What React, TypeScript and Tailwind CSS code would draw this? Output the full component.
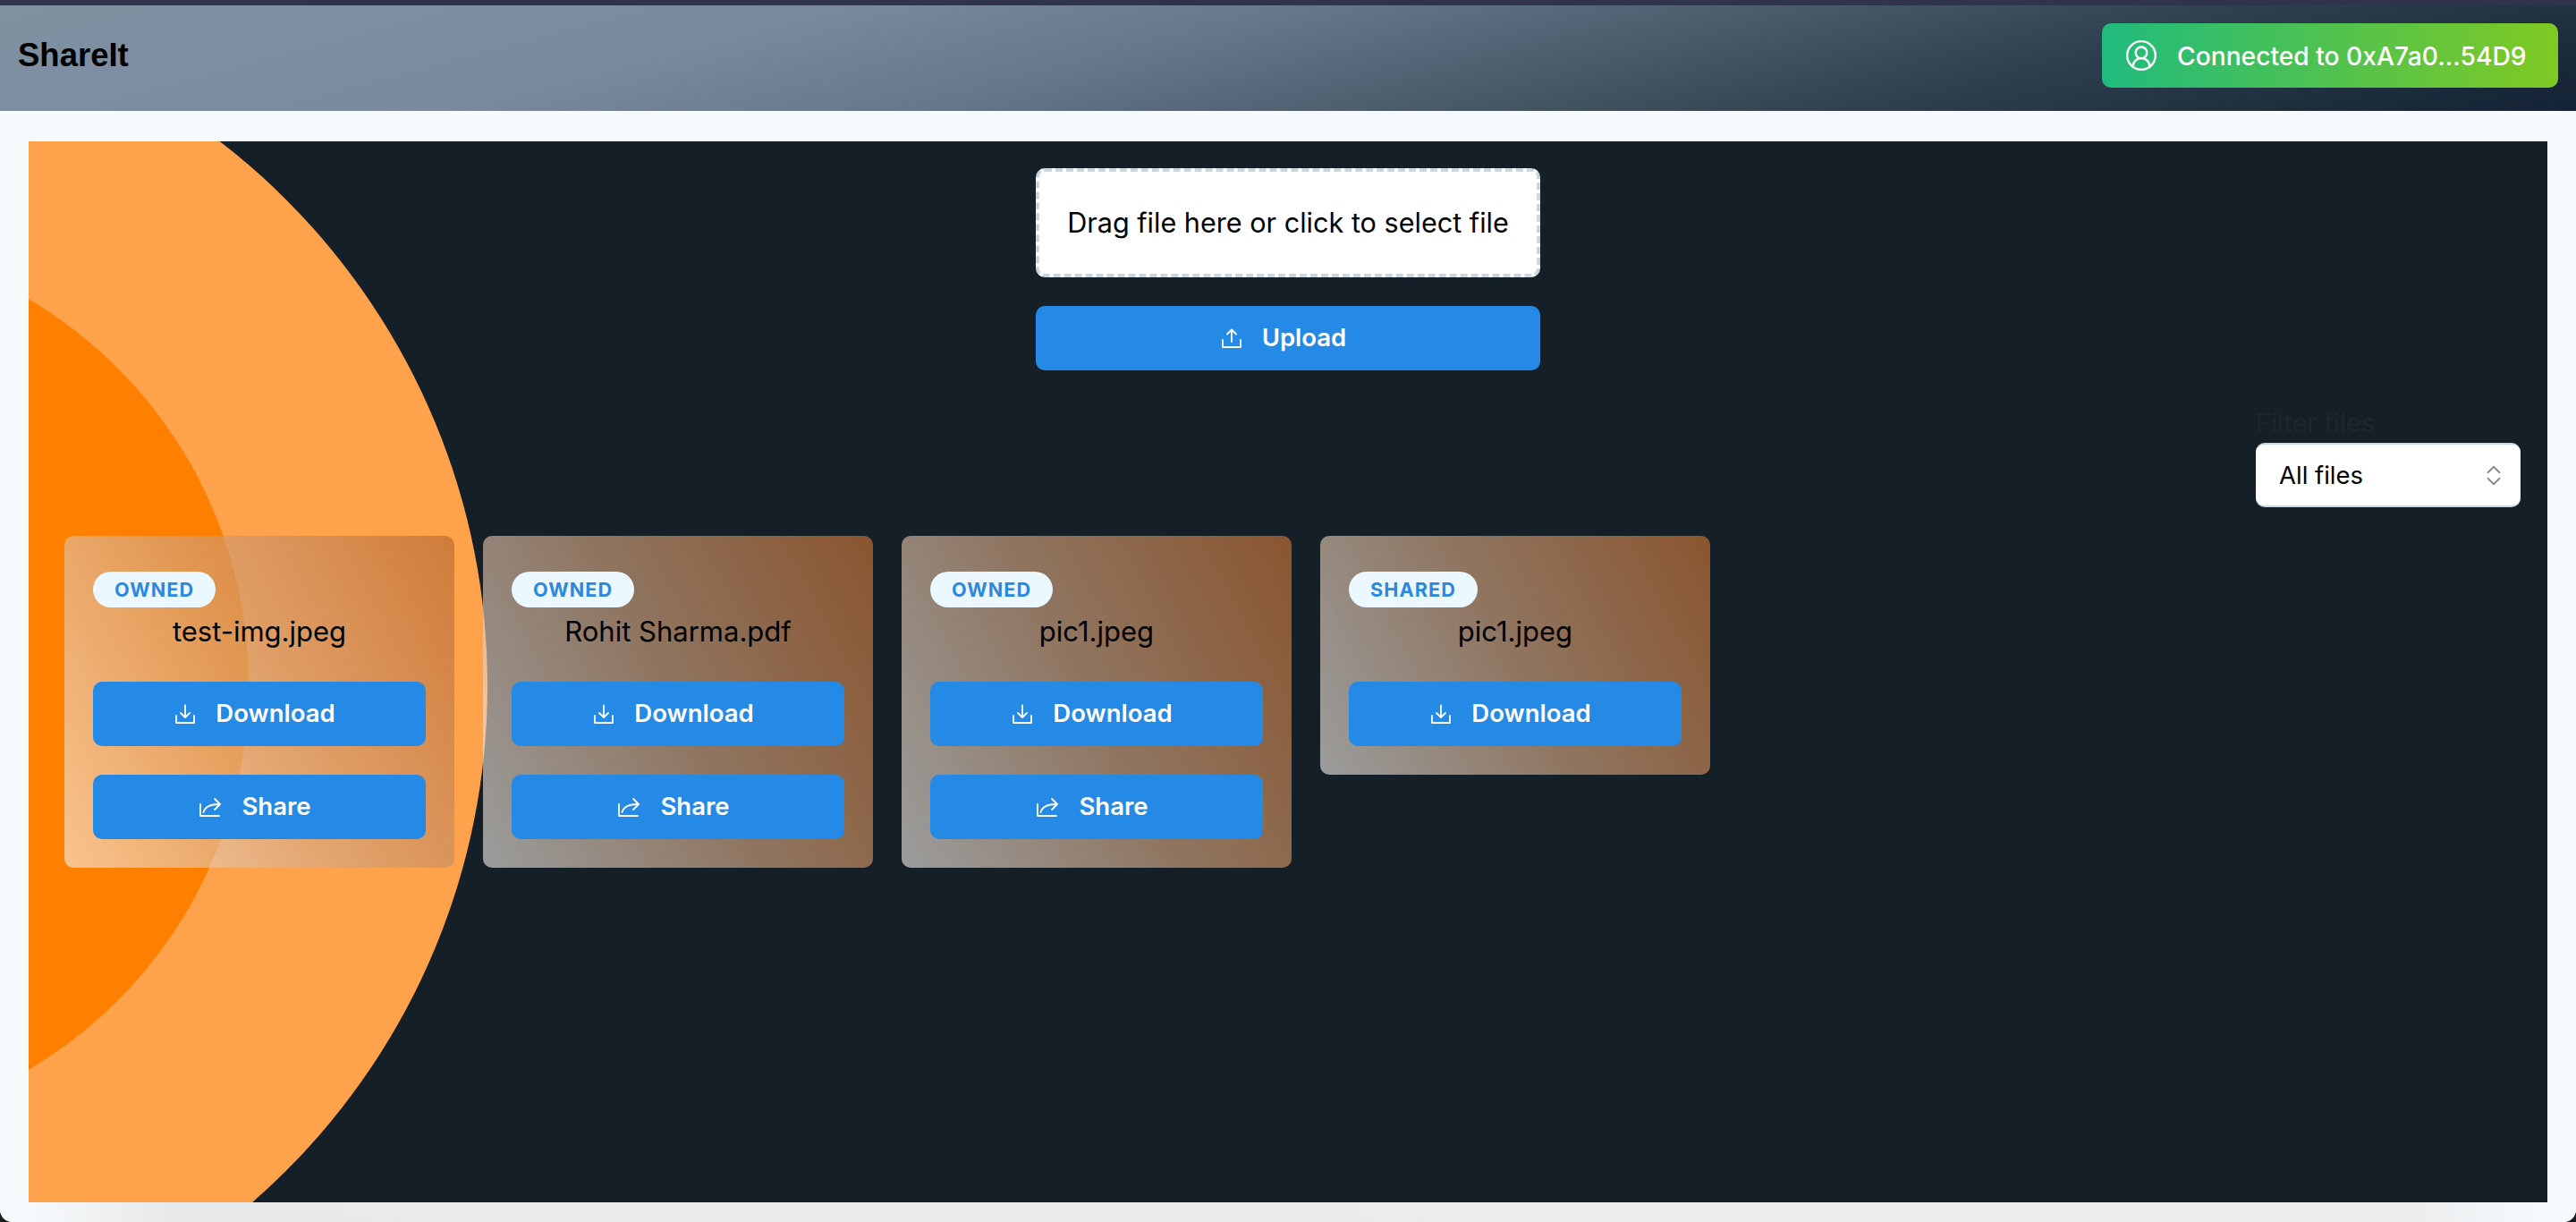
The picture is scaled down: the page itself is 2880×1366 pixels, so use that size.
import React from "react";
import { ChevronDown, ChevronUp, CircleUserRound } from "lucide-react";

const files = [
  { name: "test-img.jpeg", tag: "OWNED", canShare: true },
  { name: "Rohit Sharma.pdf", tag: "OWNED", canShare: true },
  { name: "pic1.jpeg", tag: "OWNED", canShare: true },
  { name: "pic1.jpeg", tag: "SHARED", canShare: false },
];

const UploadIcon = () => (
  <svg width="24" height="24" viewBox="0 0 24 24" fill="none" stroke="currentColor" strokeWidth="1.8" strokeLinecap="round" strokeLinejoin="round">
    <path d="M12 16V2.500M7 7.500l5-5 5 5" />
    <path d="M2 14v8h20v-8" />
  </svg>
);

const DownloadIcon = () => (
  <svg width="24" height="24" viewBox="0 0 24 24" fill="none" stroke="currentColor" strokeWidth="1.8" strokeLinecap="round" strokeLinejoin="round">
    <path d="M12 2.500V16M7 11l5 5 5-5" />
    <path d="M2 14v8h20v-8" />
  </svg>
);

const ShareIcon = () => (
  <svg width="26" height="24" viewBox="0 0 26 24" fill="none" stroke="currentColor" strokeWidth="1.8" strokeLinecap="round" strokeLinejoin="round">
    <path d="M2 9v13h21" />
    <path d="M5.500 18c1.500-6 7-9 18-9" />
    <path d="M18 3l6 6-6 6" />
  </svg>
);

const ActionButton = ({ icon, label }: { icon: React.ReactNode; label: string }) => (
  <button className="flex h-[72px] w-full items-center justify-center gap-[22px] rounded-[10px] bg-[#2589e6] pr-[10px] text-[27.5px] font-semibold text-white">
    {icon}
    <span>{label}</span>
  </button>
);

const FileCard = ({ name, tag, canShare }: { name: string; tag: string; canShare: boolean }) => (
  <div className="flex w-[436px] flex-col rounded-[10px] bg-[linear-gradient(62deg,rgba(245,240,235,0.6),rgba(209,163,126,0.65)_50%,rgba(188,108,51,0.7))] px-8 pb-8 pt-10">
    <span className="flex h-10 w-fit items-center rounded-full bg-[#ebf8ff] px-6 text-[21.6px] font-bold tracking-[1.1px] text-[#2b88df]">
      {tag}
    </span>
    <p className="h-[83px] pt-[5px] text-center text-[31px] leading-[44px] text-black">{name}</p>
    <div className="flex flex-col gap-8">
      <ActionButton icon={<DownloadIcon />} label="Download" />
      {canShare && <ActionButton icon={<ShareIcon />} label="Share" />}
    </div>
  </div>
);

export default function App() {
  return (
    <div className="h-[1366px] w-[2880px] overflow-hidden bg-[#1c1c1c] font-['Inter',sans-serif]">
      <div className="flex h-full flex-col overflow-hidden rounded-b-[14px] bg-[#f7fafc]">
        <div className="h-[6px] bg-[#30344a]" />
        <header className="flex h-[118px] items-center justify-between bg-[linear-gradient(165deg,#80919f_0%,#7d8ea3_12%,#7a8a9c_28%,#66768a_45%,#475868_62%,#2f3f50_76%,#1a2a3a_93%,#152236_100%)] pb-[6px] pl-5 pr-5">
          <h1 className="font-['Liberation_Sans',sans-serif] text-[36.500px] font-bold text-black">ShareIt</h1>
          <div className="flex h-[72px] w-[510px] items-center gap-[21px] rounded-[10px] bg-[linear-gradient(90deg,#20bb7d,#80c922)] pl-[25px] text-[28.2px] font-medium text-white">
            <CircleUserRound size={38} strokeWidth={1.5} />
            <span className="pt-[2px]">Connected to 0xA7a0...54D9</span>
          </div>
        </header>

        <div className="px-8 pt-[34px]">
          <main className="relative h-[1186px] overflow-hidden bg-[#151f27]">
            {/* background circles */}
            <div className="absolute left-[-1021px] top-[-159px] h-[1534px] w-[1534px] rounded-full bg-[#ffa24c]" />
            <div className="absolute left-[-754px] top-[107px] h-[1000px] w-[1000px] rounded-full bg-[#ff8000]" />

            <div className="relative flex flex-col">
              <div className="flex flex-col items-center gap-8 pt-[30px]">
                <div className="flex h-[122px] w-[564px] items-center justify-center rounded-[10px] border-4 border-dashed border-[#cbd5e0] bg-white text-[30.6px] text-black">
                  Drag file here or click to select file
                </div>
                <div className="w-[564px]">
                  <ActionButton icon={<UploadIcon />} label="Upload" />
                </div>
              </div>

              <div className="mt-[42px] flex justify-end pr-[30px]">
                <div className="w-[296px]">
                  <label className="block h-[39px] text-[28.8px] leading-[34px] text-[#1d262e]">Filter files</label>
                  <div className="flex h-[72px] items-center justify-between rounded-[10px] border-t-2 border-b-2 border-[#cbd5e0] bg-white pl-[26px] pr-[17px] text-[27.5px] text-black">
                    <span className="pt-[2px]">All files</span>
                    <span className="flex flex-col text-[#8c8c8c]">
                      <ChevronUp size={26} strokeWidth={1.7} className="-mb-[13px]" />
                      <ChevronDown size={26} strokeWidth={1.7} />
                    </span>
                  </div>
                </div>
              </div>

              <div className="mt-8 flex items-start gap-8 pl-10">
                {files.map((file, i) => (
                  <FileCard key={i} name={file.name} tag={file.tag} canShare={file.canShare} />
                ))}
              </div>
            </div>
          </main>
        </div>

        {/* window shadow along the bottom edge */}
        <div className="h-[22px] bg-[linear-gradient(90deg,#f7fafc_1%,#e8e9eb_6.500%,#eaebed_50%,#eceef0_94%,#f7fafc_99%)]" />
      </div>
    </div>
  );
}
